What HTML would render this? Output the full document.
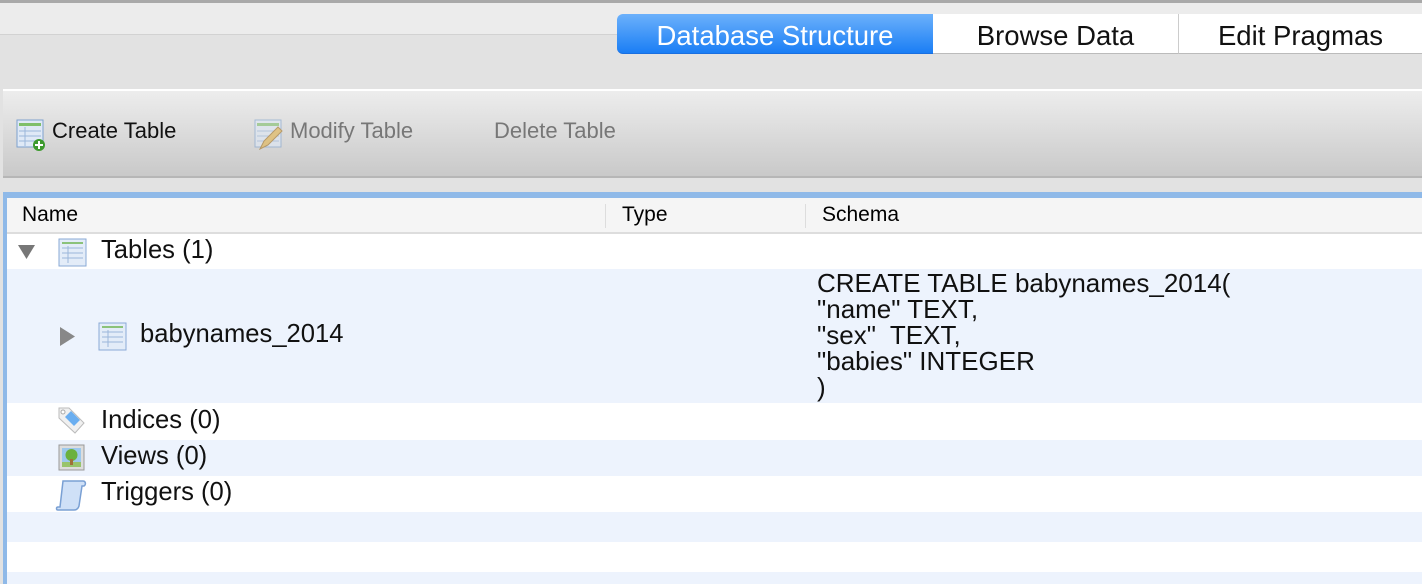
<!DOCTYPE html>
<html><head><style>
body{margin:0;width:1422px;height:584px;overflow:hidden;background:#e2e2e2;font-family:"Liberation Sans",sans-serif;position:relative}
.a{position:absolute}
.tab{position:absolute;top:14px;height:39px;line-height:43px;text-align:center;font-size:27.5px;color:#111;background:#fff;border-bottom:1px solid #bbb}
.tb{position:absolute;top:117px;font-size:22px;line-height:28px}
.row{position:absolute;left:7px;right:0}
.t{position:absolute;font-size:25.6px;color:#111}
.h{position:absolute;top:202px;font-size:21px;line-height:26px}
</style></head><body>
<div class="a" style="top:0;left:0;width:1422px;height:3px;background:#a9a9a9"></div>
<div class="a" style="top:3px;left:0;width:1422px;height:31px;background:#ececec;border-bottom:1px solid #d2d2d2"></div>
<div class="tab" style="left:617px;width:316px;background:linear-gradient(#6cb1fb,#1a7ef5);color:#fff;border-radius:6px 0 0 6px;border-bottom:1px solid #1a6fe0">Database Structure</div>
<div class="tab" style="left:933px;width:245px;border-right:1px solid #ccc">Browse Data</div>
<div class="tab" style="left:1179px;width:243px">Edit Pragmas</div>
<div class="a" style="top:89px;left:3px;width:1419px;height:2px;background:#fff"></div>
<div class="a" style="top:91px;left:3px;width:1419px;height:85px;background:linear-gradient(#ededed,#c9c9c9);border-bottom:2px solid #b6b6b6"></div>
<svg class="a" style="left:16px;top:119px" width="30" height="32"><rect x="1" y="1" width="26" height="27" fill="#dfe9f6" stroke="#7ea1cd"/><rect x="3" y="4" width="22" height="3" fill="#7fbf6a"/><g stroke="#9bb6da"><line x1="3" y1="12" x2="25" y2="12"/><line x1="3" y1="17" x2="25" y2="17"/><line x1="3" y1="22" x2="25" y2="22"/><line x1="9" y1="8" x2="9" y2="27"/></g><circle cx="23" cy="26" r="6" fill="#3d9a2e"/><path d="M23 22v8M19 26h8" stroke="#fff" stroke-width="2"/></svg>
<div class="tb" style="left:52px;color:#111">Create Table</div>
<svg class="a" style="left:254px;top:119px" width="30" height="32" opacity=".6"><rect x="1" y="1" width="26" height="27" fill="#dfe9f6" stroke="#7ea1cd"/><rect x="3" y="4" width="22" height="3" fill="#7fbf6a"/><g stroke="#9bb6da"><line x1="3" y1="12" x2="25" y2="12"/><line x1="3" y1="17" x2="25" y2="17"/><line x1="3" y1="22" x2="25" y2="22"/></g><path d="M6 30l4-8 14-14 4 4-14 14z" fill="#e3b44d" stroke="#a07020"/></svg>
<div class="tb" style="left:290px;color:#777">Modify Table</div>
<div class="tb" style="left:494px;color:#777">Delete Table</div>
<div class="a" style="top:192px;left:3px;width:1419px;height:392px;background:#8fb9e8"></div>
<div class="a" style="top:198px;left:7px;width:1415px;height:34px;background:#f5f5f5;border-bottom:2px solid #ddd"></div>
<div class="h" style="left:22px">Name</div>
<div class="a" style="top:204px;left:605px;width:1px;height:24px;background:#ddd"></div>
<div class="h" style="left:622px">Type</div>
<div class="a" style="top:204px;left:805px;width:1px;height:24px;background:#ddd"></div>
<div class="h" style="left:822px">Schema</div>
<div class="row" style="top:234px;height:35px;background:#fff"></div>
<div class="row" style="top:269px;height:134px;background:#edf3fd"></div>
<div class="row" style="top:403px;height:37px;background:#fff"></div>
<div class="row" style="top:440px;height:36px;background:#edf3fd"></div>
<div class="row" style="top:476px;height:36px;background:#fff"></div>
<div class="row" style="top:512px;height:30px;background:#edf3fd"></div>
<div class="row" style="top:542px;height:30px;background:#fff"></div>
<div class="row" style="top:572px;height:12px;background:#edf3fd"></div>
<svg class="a" style="left:18px;top:244px" width="18" height="16"><path d="M0 1h17L8.5 15z" fill="#777"/></svg>
<svg class="a" style="left:58px;top:238px" width="30" height="30"><rect x="1" y="1" width="27" height="27" fill="#e3ecf8" stroke="#8aaad6"/><rect x="4" y="4" width="21" height="2" fill="#8bc27a"/><g stroke="#9bb6da"><line x1="4" y1="10" x2="25" y2="10"/><line x1="4" y1="15" x2="25" y2="15"/><line x1="4" y1="20" x2="25" y2="20"/><line x1="10" y1="8" x2="10" y2="25"/></g></svg>
<div class="t" style="left:101px;top:236px">Tables (1)</div>
<svg class="a" style="left:60px;top:327px" width="16" height="20"><path d="M0 0l15 9.5L0 19z" fill="#888"/></svg>
<svg class="a" style="left:98px;top:322px" width="30" height="30"><rect x="1" y="1" width="27" height="27" fill="#e3ecf8" stroke="#8aaad6"/><rect x="4" y="4" width="21" height="2" fill="#8bc27a"/><g stroke="#9bb6da"><line x1="4" y1="10" x2="25" y2="10"/><line x1="4" y1="15" x2="25" y2="15"/><line x1="4" y1="20" x2="25" y2="20"/><line x1="10" y1="8" x2="10" y2="25"/></g></svg>
<div class="t" style="left:140px;top:320px">babynames_2014</div>
<div class="t" style="left:817px;top:270px;line-height:26px;font-size:26px">CREATE TABLE babynames_2014(<br>"name" TEXT,<br>"sex"&nbsp; TEXT,<br>"babies" INTEGER<br>)</div>
<svg class="a" style="left:55px;top:405px" width="32" height="32"><path d="M4 3h10l15 15-9 10L4 13z" fill="#f0f0f0" stroke="#bbb"/><path d="M10 12l6-6 9 9-6 6z" fill="#6aaef0"/><circle cx="8" cy="7" r="2" fill="#fff" stroke="#aaa"/></svg>
<div class="t" style="left:101px;top:406px">Indices (0)</div>
<svg class="a" style="left:58px;top:444px" width="28" height="28"><rect x="1" y="1" width="25" height="25" fill="#ddd" stroke="#999"/><rect x="4" y="4" width="19" height="19" fill="#9cc8ec"/><circle cx="13.5" cy="11" r="6" fill="#6bb13e"/><rect x="4" y="18" width="19" height="5" fill="#98c46b"/><rect x="12" y="15" width="3" height="6" fill="#a0703a"/></svg>
<div class="t" style="left:101px;top:442px">Views (0)</div>
<svg class="a" style="left:55px;top:478px" width="34" height="34"><path d="M8 3h20c2 0 3 2 2 4l-1 1h-2L24 28c-1 3-3 4-5 4H3c-2 0-2-3 0-3h2z" fill="#cfe0f7" stroke="#7aa0d4" stroke-width="1.5"/></svg>
<div class="t" style="left:101px;top:478px">Triggers (0)</div>
</body></html>
